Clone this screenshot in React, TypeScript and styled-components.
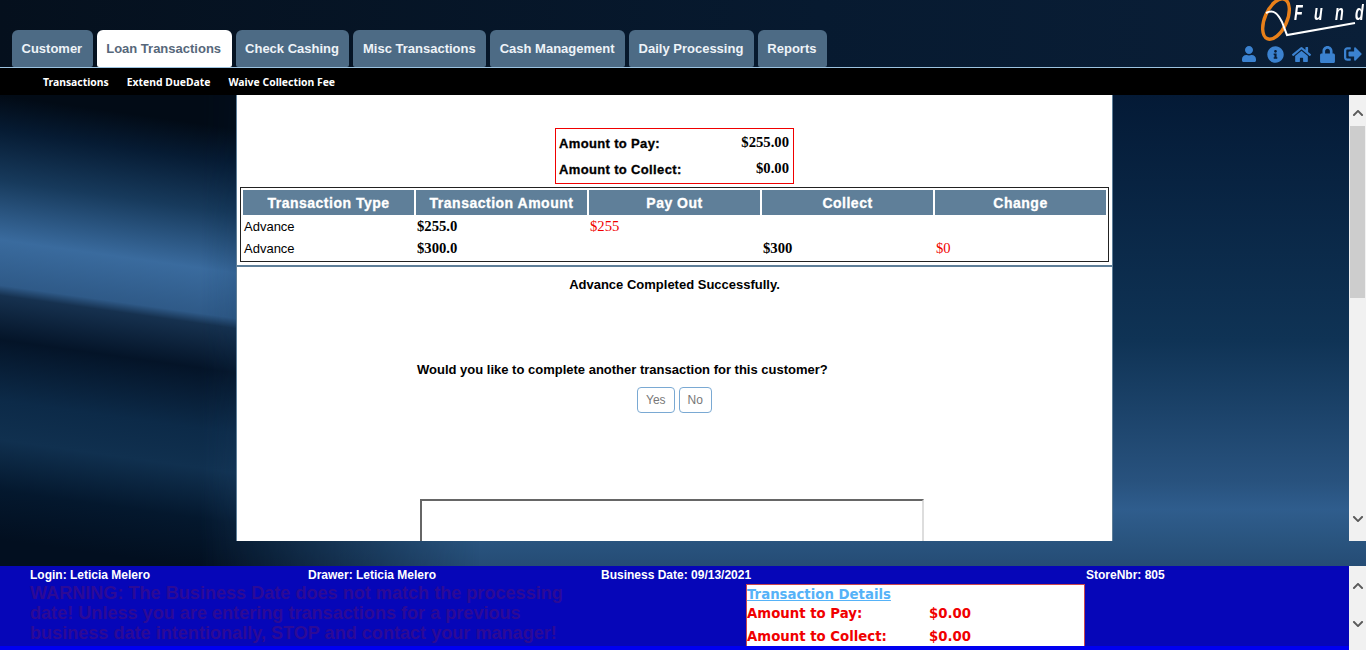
import React from "react";
import styled, { createGlobalStyle } from "styled-components";
import { FaUser, FaInfoCircle, FaHome, FaLock, FaSignOutAlt, FaChevronUp, FaChevronDown } from "react-icons/fa";

const tabs = ["Customer", "Loan Transactions", "Check Cashing", "Misc Transactions", "Cash Management", "Daily Processing", "Reports"];
const subLinks = ["Transactions", "Extend DueDate", "Waive Collection Fee"];
const columns = ["Transaction Type", "Transaction Amount", "Pay Out", "Collect", "Change"];

const GlobalStyle = createGlobalStyle`
  html, body {
    margin: 0;
    padding: 0;
    height: 100%;
    overflow: hidden;
    background: #031020;
    font-family: "Liberation Sans", Arial, sans-serif;
  }
`;

const Scrollbar = ({ thumb, footer }: { thumb?: boolean; footer?: boolean }) => (
  <Track>
    <ArrowUp $pad={footer ? 9 : 5}><FaChevronUp /></ArrowUp>
    <Rail>{thumb && <Thumb />}</Rail>
    <ArrowDown $height={footer ? 52 : 44}><FaChevronDown /></ArrowDown>
  </Track>
);

const Logo = () => (
  <LogoBox>
    <svg width="104" height="42" viewBox="0 0 104 42">
      <ellipse cx="18" cy="19" rx="11" ry="21.5" transform="rotate(24 18 19)" fill="none" stroke="#e8801a" strokeWidth="3.4" />
      <path d="M8 13 C16 9 20 14 24 22 L29 35 L97 23" fill="none" stroke="#fff" strokeWidth="2" />
    </svg>
    <LogoWord>
      {"Fund".split("").map((c) => (
        <LogoLetter key={c}>{c}</LogoLetter>
      ))}
    </LogoWord>
  </LogoBox>
);

export default function App() {
  return (
    <Page>
      <GlobalStyle />
      <Header>
        <Tabs>
          {tabs.map((t, i) => (
            <Tab key={t} $active={i === 1}>{t}</Tab>
          ))}
        </Tabs>
        <Brand>
          <Logo />
          <IconRow>
            <IconSlot><FaUser size={16} /></IconSlot>
            <IconSlot><FaInfoCircle size={17} /></IconSlot>
            <IconSlot><FaHome size={19} /></IconSlot>
            <IconSlot><FaLock size={17} /></IconSlot>
            <IconSlot><FaSignOutAlt size={18} /></IconSlot>
          </IconRow>
        </Brand>
      </Header>
      <SubNav>
        {subLinks.map((l) => (
          <SubLink key={l}>{l}</SubLink>
        ))}
      </SubNav>
      <Main>
        <MainRow>
          <Panel>
            <AmountBox>
              <AmountRow><AmountLabel>Amount to Pay:</AmountLabel><AmountValue>$255.00</AmountValue></AmountRow>
              <AmountRow><AmountLabel>Amount to Collect:</AmountLabel><AmountValue>$0.00</AmountValue></AmountRow>
            </AmountBox>
            <TxTable>
              <thead>
                <tr>{columns.map((c) => <Th key={c}>{c}</Th>)}</tr>
              </thead>
              <tbody>
                <tr>
                  <Td>Advance</Td>
                  <MoneyTd $bold>$255.0</MoneyTd>
                  <MoneyTd $red>$255</MoneyTd>
                  <Td />
                  <Td />
                </tr>
                <tr>
                  <Td>Advance</Td>
                  <MoneyTd $bold>$300.0</MoneyTd>
                  <Td />
                  <MoneyTd $bold>$300</MoneyTd>
                  <MoneyTd $red>$0</MoneyTd>
                </tr>
              </tbody>
            </TxTable>
            <Divider />
            <Success>Advance Completed Successfully.</Success>
            <Question>Would you like to complete another transaction for this customer?</Question>
            <Buttons>
              <Btn>Yes</Btn>
              <Btn>No</Btn>
            </Buttons>
            <FrameBox />
          </Panel>
          <Scrollbar thumb />
        </MainRow>
      </Main>
      <Footer>
        <FooterBody>
          <FooterInner>
            <InfoRow>
              <Info>Login: Leticia Melero</Info>
              <Info>Drawer: Leticia Melero</Info>
              <Info>Business Date: 09/13/2021</Info>
              <Info>StoreNbr: 805</Info>
            </InfoRow>
            <FooterRow>
              <Warning>
                WARNING: The Business Date does not match the processing date! Unless you are entering
                transactions for a previous business date intentionally, STOP and contact your manager!
              </Warning>
              <Details>
                <DetailsTitle>Transaction Details</DetailsTitle>
                <DetailRow><span>Amount to Pay:</span><span>$0.00</span></DetailRow>
                <DetailRow><span>Amount to Collect:</span><span>$0.00</span></DetailRow>
              </Details>
            </FooterRow>
          </FooterInner>
        </FooterBody>
        <Scrollbar footer />
      </Footer>
    </Page>
  );
}

const Page = styled.div`
  width: 1366px;
  height: 650px;
  display: flex;
  flex-direction: column;
  overflow: hidden;
`;

const Header = styled.header`
  height: 67px;
  flex: none;
  display: flex;
  justify-content: space-between;
  align-items: flex-end;
  padding-left: 12px;
  background: linear-gradient(90deg, #05101d 0%, #071a30 60%, #0a1f38 100%);
`;

const Tabs = styled.nav`
  display: flex;
  gap: 4px;
`;

const Tab = styled.div<{ $active?: boolean }>`
  height: 37px;
  box-sizing: border-box;
  padding: 0 10.5px 0 9.5px;
  display: flex;
  align-items: center;
  border-radius: 6px 6px 2px 2px;
  font-size: 13px;
  font-weight: bold;
  background: ${(p) => (p.$active ? "#fff" : "#4d6b85")};
  color: ${(p) => (p.$active ? "#56677a" : "#eef3f8")};
`;

const Brand = styled.div`
  display: flex;
  flex-direction: column;
  align-items: flex-end;
  height: 67px;
`;

const LogoBox = styled.div`
  position: relative;
  width: 104px;
  height: 42px;
  margin-right: 4px;
`;

const LogoWord = styled.span`
  position: absolute;
  left: 36px;
  top: 0;
  display: flex;
  color: #fff;
  font: italic bold 22px "Liberation Sans", Arial, sans-serif;
`;

const LogoLetter = styled.span`
  width: 20.3px;
  transform: scaleX(0.65);
  transform-origin: left top;
`;

const IconRow = styled.div`
  display: flex;
  align-items: center;
  height: 24px;
  color: #3b82d0;
`;

const IconSlot = styled.span`
  width: 26px;
  display: flex;
  justify-content: center;
`;

const SubNav = styled.div`
  height: 28px;
  flex: none;
  box-sizing: border-box;
  border-top: 1px solid #9cc3e0;
  padding-top: 1px;
  background: #000;
  display: flex;
  align-items: center;
  gap: 18px;
  padding-left: 43px;
`;

const SubLink = styled.span`
  color: #fff;
  font: bold 10.4px "Noto Sans", Tahoma, sans-serif;
`;

const Main = styled.main`
  position: relative;
  isolation: isolate;
  height: 471px;
  flex: none;
  box-sizing: border-box;
  padding-bottom: 25px;
  background: linear-gradient(180deg, #041a36 0%, #0f3355 52%, #28527e 82%, #2f5d8d 88%, #2a5580 94%, #254c75 100%);

  &::before {
    content: "";
    position: absolute;
    z-index: -1;
    left: 0;
    top: 0;
    width: 500px;
    height: 471px;
    background: linear-gradient(
      188deg,
      #020b16 70px,
      #061b33 104px,
      #173a5c 154px,
      #3a6b9e 213px,
      #2f5a88 258px,
      #16314f 268px,
      #041428 312px,
      #0c2a48 372px,
      #10304f 411px,
      #04182e 461px,
      #020f20 510px
    );
    -webkit-mask-image: linear-gradient(90deg, #000 200px, transparent 480px);
    mask-image: linear-gradient(90deg, #000 200px, transparent 480px);
  }
`;

const MainRow = styled.div`
  height: 446px;
  display: flex;
  justify-content: space-between;
  padding-left: 236px;
`;

const Panel = styled.section`
  width: 877px;
  box-sizing: border-box;
  height: 446px;
  overflow: hidden;
  background: #fff;
  border-left: 1px solid #5f7f99;
  border-right: 1px solid #5f7f99;
  padding-top: 33px;
`;

const AmountBox = styled.div`
  width: 239px;
  height: 56px;
  box-sizing: border-box;
  margin-left: 318px;
  border: 1px solid #f00000;
  padding: 1px 4px 0 3px;
`;

const AmountRow = styled.div`
  height: 26px;
  display: flex;
  align-items: center;
  justify-content: space-between;
`;

const AmountLabel = styled.span`
  font-size: 13px;
  font-weight: bold;
  letter-spacing: 0.35px;
  -webkit-text-stroke: 0.3px #000;
`;

const AmountValue = styled.span`
  font: bold 14.67px "Liberation Serif", "Times New Roman", serif;
  margin-top: -2px;
`;

const TxTable = styled.table`
  width: 869px;
  margin: 3px 0 0 3px;
  table-layout: fixed;
  border: 1px solid #222;
  border-spacing: 2px;
  font-size: 13px;
`;

const Th = styled.th`
  height: 25px;
  padding: 0;
  background: #5f7f99;
  color: #fff;
  font-size: 14px;
  letter-spacing: 0.5px;
  -webkit-text-stroke: 0.3px #fff;
`;

const Td = styled.td`
  height: 19px;
  padding: 0 1px 1px;
`;

const MoneyTd = styled(Td)<{ $bold?: boolean; $red?: boolean }>`
  font: ${(p) => (p.$bold ? "bold" : "normal")} 14.67px "Liberation Serif", "Times New Roman", serif;
  color: ${(p) => (p.$red ? "#f00000" : "#000")};
`;

const Divider = styled.div`
  height: 2px;
  margin-top: 3px;
  background: #5f7f99;
`;

const Success = styled.p`
  margin: 10px 0 0;
  text-align: center;
  font-size: 13px;
  font-weight: bold;
  line-height: 16px;
`;

const Question = styled.p`
  margin: 69px 0 0 180px;
  font-size: 13px;
  font-weight: bold;
  line-height: 16px;
`;

const Buttons = styled.div`
  display: flex;
  justify-content: center;
  gap: 4px;
  margin-top: 9px;
`;

const Btn = styled.button`
  height: 26px;
  padding: 0 8px;
  background: #fff;
  border: 1px solid #7aa9d3;
  border-radius: 4px;
  color: #777;
  font: 12px "Liberation Sans", Arial, sans-serif;
`;

const FrameBox = styled.div`
  width: 504px;
  height: 120px;
  box-sizing: border-box;
  margin: 86px 0 0 183px;
  border: 2px solid;
  border-color: #666 #ddd #ddd #666;
`;

const Track = styled.div`
  width: 17px;
  flex: none;
  display: flex;
  flex-direction: column;
  background: #f1f1f1;
`;

const ArrowUp = styled.div<{ $pad: number }>`
  height: 31px;
  flex: none;
  box-sizing: border-box;
  padding-top: ${(p) => p.$pad}px;
  display: flex;
  align-items: center;
  justify-content: center;
  color: #5a5a5a;
  font-size: 12px;
`;

const ArrowDown = styled.div<{ $height: number }>`
  height: ${(p) => p.$height}px;
  flex: none;
  display: flex;
  align-items: center;
  justify-content: center;
  color: #5a5a5a;
  font-size: 12px;
`;

const Rail = styled.div`
  flex: 1;
  min-height: 0;
`;

const Thumb = styled.div`
  height: 172px;
  margin: 0 1px;
  background: #cdcdcd;
`;

const Footer = styled.footer`
  height: 84px;
  flex: none;
  display: flex;
  justify-content: space-between;
`;

const FooterBody = styled.div`
  flex: 1;
  min-width: 0;
  background: #0000f0;
`;

const FooterInner = styled.div`
  height: 80px;
  overflow: hidden;
  box-sizing: border-box;
  padding-left: 30px;
  background: #0606b8;
`;

const InfoRow = styled.div`
  display: grid;
  grid-template-columns: 278px 293px 485px 1fr;
  height: 18px;
  align-items: center;
`;

const Info = styled.span`
  color: #fff;
  font-size: 12px;
  font-weight: bold;
`;

const FooterRow = styled.div`
  display: flex;
  align-items: flex-start;
`;

const Warning = styled.div`
  width: 540px;
  color: #2c0a96;
  font-size: 18.1px;
  font-weight: bold;
  line-height: 20px;
  margin-top: -1px;
`;

const Details = styled.div`
  width: 339px;
  height: 62px;
  box-sizing: border-box;
  margin-left: 176px;
  background: #fff;
  border: 1px solid #c8474f;
  border-bottom: none;
  overflow: hidden;
`;

const DetailsTitle = styled.div`
  height: 17px;
  color: #55b2f8;
  font: bold 13.3px "DejaVu Sans", Verdana, sans-serif;
  text-decoration: underline;
  line-height: 19px;
`;

const DetailRow = styled.div`
  display: grid;
  grid-template-columns: 182px 1fr;
  height: 23px;
  align-items: center;
  color: #f00000;
  font: bold 13.3px "DejaVu Sans", Verdana, sans-serif;
`;
